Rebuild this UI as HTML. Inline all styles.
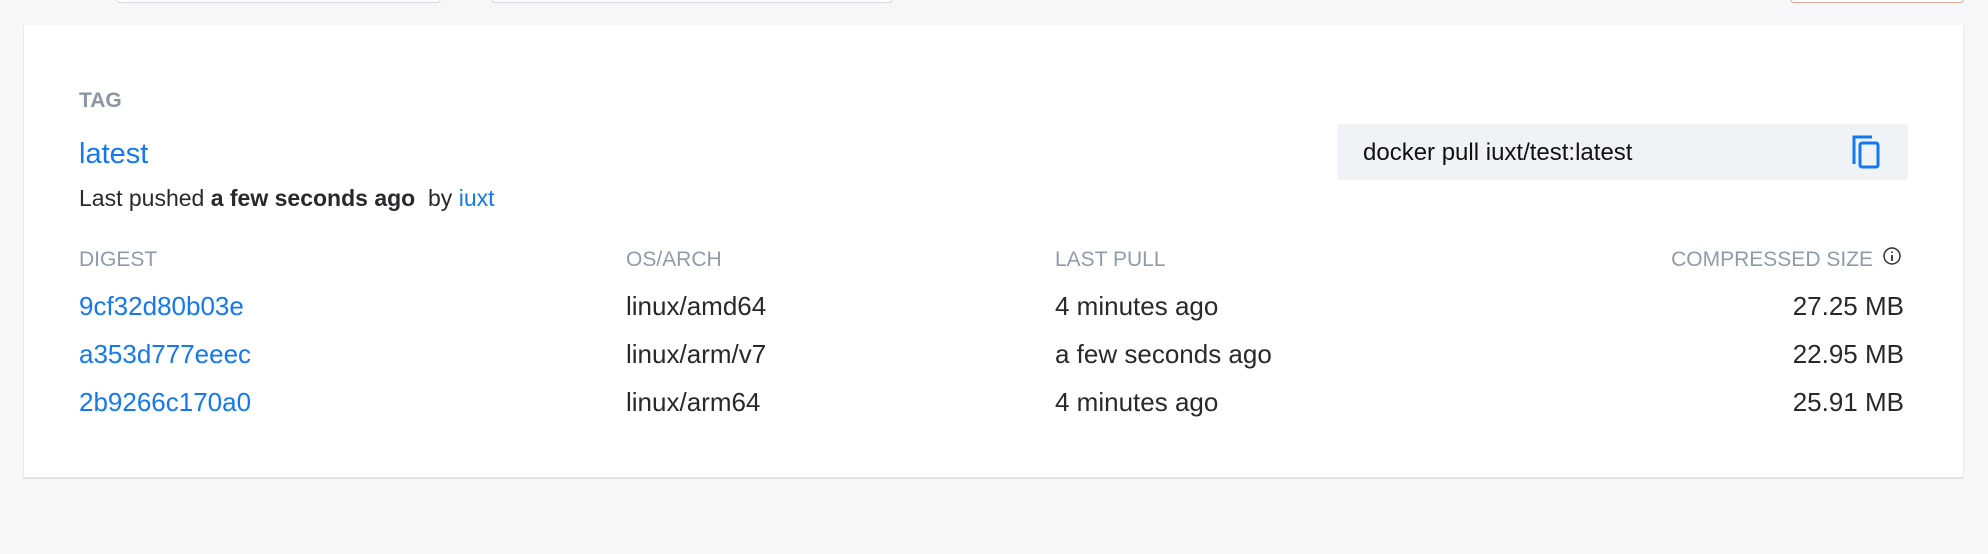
<!DOCTYPE html>
<html><head><style>
body{margin:0;width:1988px;height:554px;background:#f6f7f9;font-family:"Liberation Sans",sans-serif;position:relative;overflow:hidden}
.a{position:absolute}
.card{left:23px;top:25px;width:1939px;height:452px;background:#fff;border-bottom:2px solid #e1e3e6;border-right:1px solid #e8e9eb;border-left:1px solid #e8e9eb}
.h{color:#8f9ba8;font-size:21px}
.t{color:#27292c;font-size:26px}
.l{color:#1478f0;font-size:26px}
</style></head><body>
<div class="a" style="left:116px;top:-10px;width:323px;height:11px;border:1px solid #d7dadd;border-radius:4px;background:#fff"></div>
<div class="a" style="left:492px;top:-10px;width:398px;height:11px;border:1px solid #d7dadd;border-radius:2px;background:#fff"></div>
<div class="a" style="left:1790px;top:-10px;width:172px;height:11px;border:1px solid #e8a59a;border-radius:4px;background:#fff"></div>
<div class="a card"></div>
<div class="a h" style="left:79px;top:89px;font-weight:bold;color:#8a96a3">TAG</div>
<div class="a l" style="left:79px;top:138px;font-size:29px">latest</div>
<div class="a t" style="left:79px;top:185px;font-size:23px">Last pushed <b>a few seconds ago</b>&nbsp; by <span style="color:#1478f0">iuxt</span></div>
<div class="a" style="left:1337px;top:124px;width:571px;height:56px;background:#f0f3f6;border-radius:4px"></div>
<div class="a t" style="left:1363px;top:139px;font-size:24px;color:#111">docker pull iuxt/test:latest</div>
<svg class="a" style="left:1851px;top:134px" width="32" height="36" viewBox="0 0 32 36"><path d="M3 30V3h18" fill="none" stroke="#1478f0" stroke-width="3"/><rect x="9" y="9" width="18" height="24" rx="2" fill="none" stroke="#1478f0" stroke-width="3"/></svg>
<div class="a h" style="left:79px;top:248px">DIGEST</div>
<div class="a h" style="left:626px;top:248px">OS/ARCH</div>
<div class="a h" style="left:1055px;top:248px">LAST PULL</div>
<div class="a h" style="right:115px;top:248px">COMPRESSED SIZE</div>
<svg class="a" style="left:1882px;top:246px" width="20" height="20"><circle cx="10" cy="10" r="8" fill="none" stroke="#333" stroke-width="1.5"/><path d="M10 9v6M10 5.5v1.5" stroke="#333" stroke-width="1.8"/></svg>
<div class="a l" style="left:79px;top:291px">9cf32d80b03e</div>
<div class="a l" style="left:79px;top:339px">a353d777eeec</div>
<div class="a l" style="left:79px;top:387px">2b9266c170a0</div>
<div class="a t" style="left:626px;top:291px">linux/amd64</div>
<div class="a t" style="left:626px;top:339px">linux/arm/v7</div>
<div class="a t" style="left:626px;top:387px">linux/arm64</div>
<div class="a t" style="left:1055px;top:291px">4 minutes ago</div>
<div class="a t" style="left:1055px;top:339px">a few seconds ago</div>
<div class="a t" style="left:1055px;top:387px">4 minutes ago</div>
<div class="a t" style="right:84px;top:291px">27.25 MB</div>
<div class="a t" style="right:84px;top:339px">22.95 MB</div>
<div class="a t" style="right:84px;top:387px">25.91 MB</div>
</body></html>
